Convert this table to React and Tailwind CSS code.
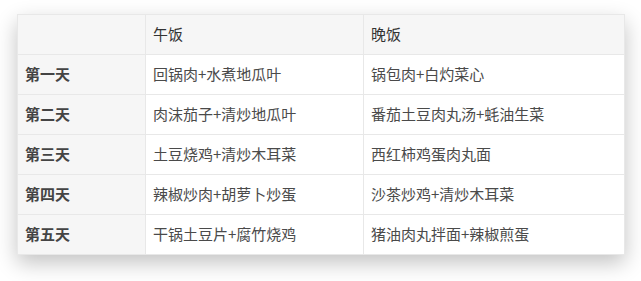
import React from 'react';

const meals = [
  { day: '第一天', lunch: '回锅肉+水煮地瓜叶', dinner: '锅包肉+白灼菜心' },
  { day: '第二天', lunch: '肉沫茄子+清炒地瓜叶', dinner: '番茄土豆肉丸汤+蚝油生菜' },
  { day: '第三天', lunch: '土豆烧鸡+清炒木耳菜', dinner: '西红柿鸡蛋肉丸面' },
  { day: '第四天', lunch: '辣椒炒肉+胡萝卜炒蛋', dinner: '沙茶炒鸡+清炒木耳菜' },
  { day: '第五天', lunch: '干锅土豆片+腐竹烧鸡', dinner: '猪油肉丸拌面+辣椒煎蛋' },
];

const App = () => {
  return (
    <div
      className="w-[641px] h-[281px] bg-white px-[17px] pt-[14px]"
      style={{ fontFamily: '"Noto Sans CJK SC", "Noto Sans", sans-serif' }}
    >
      <table className="w-[607px] table-fixed border-collapse text-[15px] text-[#4a4a4a] shadow-[0_8px_20px_rgba(0,0,0,0.24)]">
        <colgroup>
          <col className="w-[128px]" />
          <col className="w-[218px]" />
          <col className="w-[261px]" />
        </colgroup>
        <thead>
          <tr className="h-[40px] bg-[#f6f6f6]">
            <th className="border border-[#e8e8e8]"></th>
            <th className="border border-[#e8e8e8] pl-[7px] text-left font-normal text-[#333]">午饭</th>
            <th className="border border-[#e8e8e8] pl-[7px] text-left font-normal text-[#333]">晚饭</th>
          </tr>
        </thead>
        <tbody>
          {meals.map(row => (
            <tr key={row.day} className="h-[40px]">
              <td className="border border-[#e8e8e8] bg-[#f6f6f6] pl-[7px] font-semibold text-[#444]">{row.day}</td>
              <td className="border border-[#e8e8e8] bg-white pl-[7px]">{row.lunch}</td>
              <td className="border border-[#e8e8e8] bg-white pl-[7px]">{row.dinner}</td>
            </tr>
          ))}
        </tbody>
      </table>
    </div>
  );
};

export default App;
